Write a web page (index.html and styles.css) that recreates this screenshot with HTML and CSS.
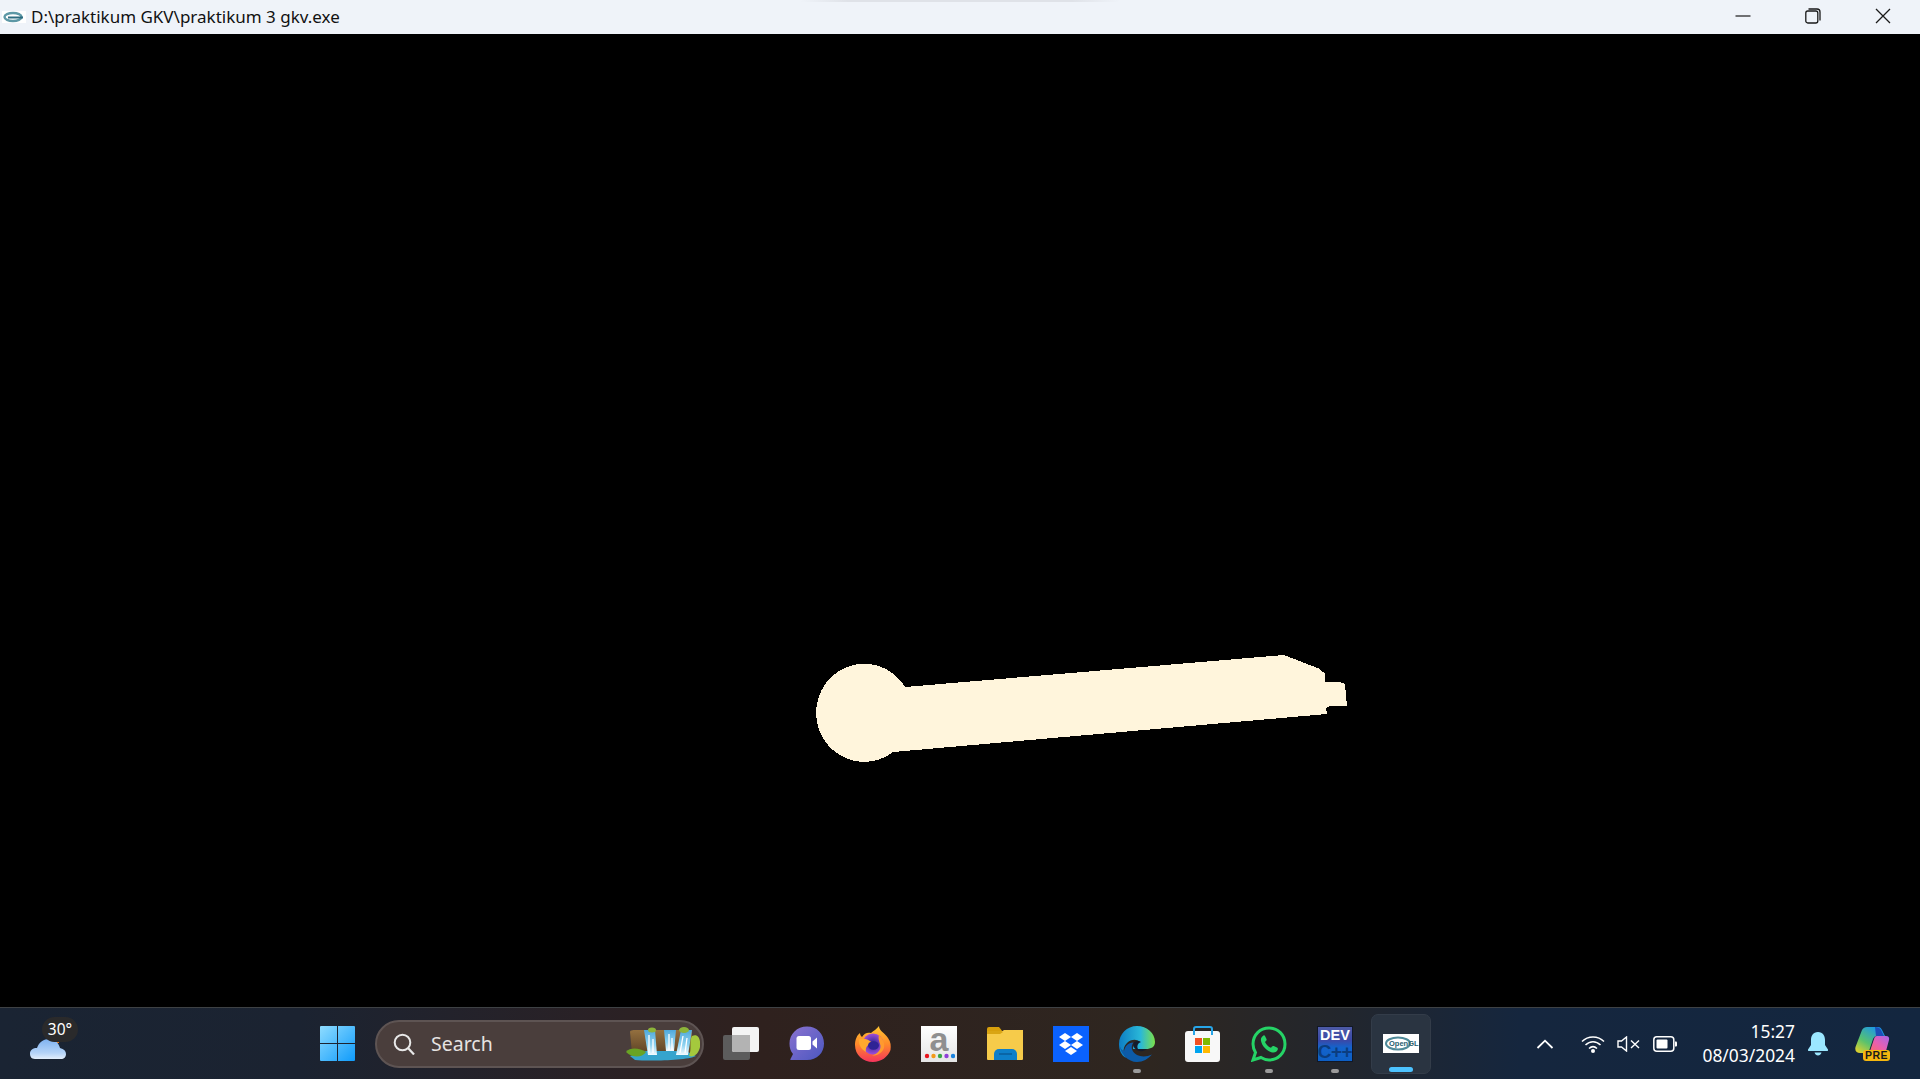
FILE: index.html
```html
<!DOCTYPE html>
<html lang="en">
<head>
<meta charset="utf-8">
<title>praktikum 3 gkv</title>
<link rel="stylesheet" href="styles.css">
</head>
<body>
<div class="desktop">
  <header class="titlebar">
    <span class="top-shade"></span>
    <svg class="title-icon" viewBox="0 0 24 12"><rect width="24" height="12" fill="#fff"/><ellipse cx="11" cy="6" rx="8.500" ry="4" fill="none" stroke="#5d98a6" stroke-width="2.400"/><path d="M6 6.500h15" stroke="#2d6c80" stroke-width="2"/></svg>
    <span class="title-text">D:\praktikum GKV\praktikum 3 gkv.exe</span>
    <div class="win-controls">
      <svg class="win-btn" viewBox="0 0 16 16"><path d="M0.500 8h15" stroke="#1a1a1a" stroke-width="1.200"/></svg>
      <svg class="win-btn" viewBox="0 0 16 16"><rect x="0.800" y="3" width="12" height="12" rx="2" fill="none" stroke="#1a1a1a" stroke-width="1.300"/><path d="M3.500 1h8.500a3 3 0 0 1 3 3v8.500" fill="none" stroke="#1a1a1a" stroke-width="1.300"/></svg>
      <svg class="win-btn" viewBox="0 0 16 16"><path d="M1 1l14 14M15 1L1 15" stroke="#1a1a1a" stroke-width="1.300"/></svg>
    </div>
  </header>

  <main class="viewport">
    <svg class="scene" viewBox="0 34 1920 973">
      <path class="shape" d="M905 687A48 49 0 1 0 893 752L1327 714L1326 708L1330 706L1347 706L1346 695L1345 684L1340 682L1325 682L1325 673L1322 672L1320 669L1284 655Z"/>
    </svg>
  </main>

  <footer class="taskbar">
    <div class="weather">
      <svg class="weather-icon" viewBox="0 0 36 22"><defs><linearGradient id="cloud" x1="0" y1="0" x2="0" y2="1"><stop offset="0" stop-color="#7fb2f0"/><stop offset="0.7" stop-color="#b5d4f8"/><stop offset="1" stop-color="#e3effc"/></linearGradient></defs><rect x="22" y="1" width="7" height="5" fill="#e8791b"/><path d="M5 22C1 22 0 19 0 16.500C0 13 3 11 7 11C9 5 14 2 19 2C26 2 29 7 30 11C34 12 36 14 36 17C36 20 34 22 31 22Z" fill="url(#cloud)"/></svg>
      <span class="temp">30°</span>
    </div>

    <div class="center">
      <button class="start" aria-label="Start">
        <svg class="ico35" viewBox="0 0 35 35"><defs><linearGradient id="win" x1="0" y1="0" x2="1" y2="1"><stop offset="0" stop-color="#8fdcff"/><stop offset="1" stop-color="#0f9bfb"/></linearGradient></defs><path fill="url(#win)" d="M1 0H17V17H0V1a1 1 0 0 1 1-1ZM18 0H34a1 1 0 0 1 1 1V17H18ZM0 18H17V35H1a1 1 0 0 1-1-1ZM18 18H35V34a1 1 0 0 1-1 1H18Z"/></svg>
      </button>

      <div class="search">
        <svg class="search-ico" viewBox="0 0 22 22"><circle cx="9.500" cy="9.500" r="7.800" fill="none" stroke="#e8e8e8" stroke-width="2"/><path d="M15 15l6 6.500" stroke="#e8e8e8" stroke-width="2.200"/></svg>
        <span class="search-label">Search</span>
        <svg class="waterfall" viewBox="0 0 74 34"><defs><linearGradient id="rock" x1="0" y1="0" x2="0" y2="1"><stop offset="0" stop-color="#94703f"/><stop offset="1" stop-color="#5f4426"/></linearGradient><linearGradient id="fall" x1="0" y1="0" x2="0" y2="1"><stop offset="0" stop-color="#4fa9dc"/><stop offset="0.6" stop-color="#8fd3f0"/><stop offset="1" stop-color="#f5fcff"/></linearGradient></defs><path d="M4 5C4 3 8 3 12 3H66V26H6Z" fill="url(#rock)"/><path d="M4 29L20 24H60L70 29C60 34 20 34 9 33Z" fill="#35a4cd"/><path d="M18 3H29L31 28H22Z" fill="url(#fall)"/><path d="M23 8V26M27 12V26" stroke="#fff" stroke-width="1.300"/><path d="M38 3H50L48 24H40Z" fill="url(#fall)"/><path d="M43 7V23M46 11V23" stroke="#fff" stroke-width="1.300"/><path d="M55 3H66L62 28H50Z" fill="url(#fall)"/><path d="M57 9L54 26M61 11L59 26" stroke="#fff" stroke-width="1.300"/><path d="M0 25C4 20 14 21 20 25C16 31 6 31 0 25Z" fill="#69a324"/><path d="M66 9C72 6 75 12 74 20C73 26 68 31 63 29C66 22 63 14 66 9Z" fill="#a4c93d"/><ellipse cx="26" cy="3" rx="4" ry="2.500" fill="#8cb43a"/><ellipse cx="58" cy="3" rx="5" ry="3" fill="#8cb43a"/></svg>
      </div>

      <div class="apps">
        <div class="app">
          <svg class="ico36" viewBox="0 0 36 36"><rect x="0" y="9" width="27" height="25" rx="2" fill="#5c5c5c"/><rect x="9" y="1" width="27" height="25" rx="2" fill="#f4f4f4"/><path d="M9 9H27V26H11a2 2 0 0 1-2-2Z" fill="#b3b3b3"/></svg>
        </div>
        <div class="app">
          <svg class="ico36" viewBox="0 0 36 36"><defs><linearGradient id="chat" x1="0" y1="0" x2="1" y2="1"><stop offset="0" stop-color="#8a72d0"/><stop offset="1" stop-color="#4b57c0"/></linearGradient></defs><path d="M18 0.500C28 0.500 35 8 35 17.500C35 27 28 34 18 34H2.500C1 34 1 33.500 2 32L4 28C1.500 25 0.500 21.500 0.500 17.500C0.500 8 8 0.500 18 0.500Z" fill="url(#chat)"/><rect x="7.500" y="10" width="14.500" height="14" rx="2.500" fill="#fff"/><path d="M23.500 15.500L28 11.500V22.500L23.500 18.500Z" fill="#fff"/></svg>
        </div>
        <div class="app">
          <svg class="ico36" viewBox="0 0 36 36"><defs><linearGradient id="fx" x1="0.500" y1="0" x2="0.500" y2="1"><stop offset="0" stop-color="#ffc632"/><stop offset="0.5" stop-color="#ff8a2a"/><stop offset="1" stop-color="#f5345c"/></linearGradient><radialGradient id="fxc"><stop offset="0.2" stop-color="#3b2a9c"/><stop offset="1" stop-color="#a04fd8"/></radialGradient></defs><path d="M24 0C24 5 30 7 33 12C36 16 36 20 35.500 24C33 31 26 36 18 36C8 36 0 29 0 19C0 14 2 9 5 7C5 9 6 10 7 11C9 7 13 6 16 7C18 5 22 3 24 0Z" fill="url(#fx)"/><circle cx="18" cy="18" r="10.500" fill="url(#fxc)"/><path d="M4 13C10 12 13 13 18 17C13 18 10 21 11 26C6 23 3 18 4 13Z" fill="#ffa92e"/><path d="M24 9C28 13 30 17 29 22C27 27 22 30 17 29.500C23 28 27 23 25 18C24 15 23 12 24 9Z" fill="#ff9a2e"/><ellipse cx="18.500" cy="19.500" rx="5.500" ry="4.200" fill="#2e2395"/></svg>
        </div>
        <div class="app">
          <div class="amazon">
            <span class="amazon-a">a</span>
            <svg class="amazon-dots" viewBox="0 0 31 6"><circle cx="3" cy="3" r="2.200" fill="#e8141c"/><circle cx="9.500" cy="3" r="2.200" fill="#f39a1a"/><circle cx="16" cy="3" r="2.200" fill="#3aa648"/><circle cx="22.500" cy="3" r="2.200" fill="#8f3fd8"/><circle cx="29" cy="3" r="2.200" fill="#1b84e0"/></svg>
          </div>
        </div>
        <div class="app">
          <svg class="ico36" viewBox="0 0 36 34"><path d="M0 2a2 2 0 0 1 2-2H12L16 5H0Z" fill="#d79f0c"/><path d="M0 5H14L17 3H36V32a1 1 0 0 1-1 1H1a1 1 0 0 1-1-1Z" fill="#f6cb4a"/><path d="M0 4H14L16 5L13 7H0Z" fill="#d9a514"/><path d="M7 33V27a5 5 0 0 1 5-5H25a5 5 0 0 1 5 5V33Z" fill="#0e7fc9"/><path d="M12 27H25" stroke="#0a5d9a" stroke-width="1.500"/></svg>
        </div>
        <div class="app">
          <svg class="ico36" viewBox="0 0 36 36"><rect width="36" height="36" fill="#0a62fe"/><path fill="#fff" d="M12 7L18 11L12 15L6 11ZM24 7L30 11L24 15L18 11ZM12 15L18 19L12 23L6 19ZM24 15L30 19L24 23L18 19ZM18 21L24 25L18 29L12 25Z"/></svg>
        </div>
        <div class="app">
          <svg class="ico36" viewBox="0 0 36 36"><defs><linearGradient id="edge1" x1="0" y1="0.500" x2="1" y2="0.500"><stop offset="0" stop-color="#0d7ec4"/><stop offset="0.6" stop-color="#2ab8d8"/><stop offset="1" stop-color="#7be04a"/></linearGradient></defs><path d="M18 0C28 0 36 7 36 16C36 21 32 23 27 23H14C14 19 17 16 21 16C18 13 13 13 9 16C4 20 3 27 7 32C2 29 0 24 0 18C0 8 8 0 18 0Z" fill="url(#edge1)"/><path d="M0.500 19C1.500 28 9 36 18 36C24 36 29 33 33 28.500C28 31 22 31 18 29C13 26 11 21 14.500 16.500C9 17 6 20 5 25C2.500 24 1 22 0.500 19Z" fill="#0c5ba8"/><path d="M15 16.500C17 14.500 20 14.500 22 16C19 17 17.500 20 19 23H28C25 25.500 20.500 26 17 23.500C14.500 21.500 13.500 19 15 16.500Z" fill="#141c2c"/></svg>
          <span class="dot"></span>
        </div>
        <div class="app">
          <svg class="ico36" viewBox="0 0 36 36"><rect x="0" y="5" width="35" height="31" rx="3" fill="#f8f8f8"/><path d="M9 9V3a2 2 0 0 1 2-2H25a2 2 0 0 1 2 2V9" fill="none" stroke="#27a5e8" stroke-width="2"/><rect x="10" y="12" width="7" height="7" fill="#f25022"/><rect x="18" y="12" width="7" height="7" fill="#7fba00"/><rect x="10" y="20" width="7" height="7" fill="#00a4ef"/><rect x="18" y="20" width="7" height="7" fill="#ffb900"/></svg>
        </div>
        <div class="app">
          <svg class="ico36" viewBox="0 0 36 36"><path d="M18 2C9 2 2 9 2 18C2 21 3 24 4.500 26.500L2 34L10 31.500C12.500 33 15 34 18 34C27 34 34 27 34 18C34 9 27 2 18 2Z" fill="none" stroke="#25d366" stroke-width="3"/><path d="M12.500 9.500C11 10.500 9.500 12 10 15C11 20 16 25.500 21.500 26.500C24 27 26 25.500 26.800 23.500C27 22.500 26.800 22 26 21.600L22.800 20C22 19.700 21.500 20 21 20.600L20 21.800C17.500 21 15 18.500 14 16L15.200 14.800C15.700 14.200 15.700 13.700 15.500 13L14 10C13.700 9.300 13 9.200 12.500 9.500Z" fill="#25d366"/></svg>
          <span class="dot"></span>
        </div>
        <div class="app">
          <div class="dev">
            <span class="dev-top">DEV</span>
            <span class="dev-bottom">C++</span>
          </div>
          <span class="dot"></span>
        </div>
        <div class="app active">
          <div class="ogl">
            <svg class="ogl-swoosh" viewBox="0 0 36 19"><ellipse cx="15" cy="9.500" rx="12" ry="6" fill="none" stroke="#4f8a99" stroke-width="2"/></svg>
            <span class="ogl-text">OpenGL</span>
          </div>
          <span class="run"></span>
        </div>
      </div>
    </div>

    <div class="tray">
      <svg class="chev" viewBox="0 0 18 10"><path d="M1.500 9L9 1.700L16.500 9" fill="none" stroke="#fff" stroke-width="1.800"/></svg>
      <svg class="wifi" viewBox="0 0 24 18"><g fill="none" stroke="#fff" stroke-width="1.500"><path d="M1 6.500C7 0.500 17 0.500 23 6.500"/><path d="M4.500 10C9 5.500 15 5.500 19.500 10"/><path d="M8 13.500C10.500 11.200 13.500 11.200 16 13.500"/></g><circle cx="12" cy="16" r="2" fill="#fff"/></svg>
      <svg class="vol" viewBox="0 0 23 16"><path d="M1 5H4.500L9.500 1V15L4.500 11H1Z" fill="none" stroke="#fff" stroke-width="1.400"/><path d="M14 4.500L22 12M22 4.500L14 12" stroke="#fff" stroke-width="1.400"/></svg>
      <svg class="batt" viewBox="0 0 24 16"><rect x="0.800" y="0.800" width="20" height="14.400" rx="3" fill="none" stroke="#fff" stroke-width="1.500"/><rect x="3.500" y="3.500" width="11" height="9" rx="1" fill="#fff"/><path d="M22 5.500h1a1 1 0 0 1 1 1v3a1 1 0 0 1-1 1h-1Z" fill="#fff"/></svg>
      <div class="clock"><span>15:27</span><span>08/03/2024</span></div>
      <svg class="bell" viewBox="0 0 20 24"><path d="M10 0C5 0 3 4 3 8V13L0 17.500C-0.300 18.500 0.300 19 1 19H19C19.700 19 20.300 18.500 20 17.500L17 13V8C17 4 15 0 10 0Z" fill="#9be7ff"/><path d="M6.500 20.500H13.500C13 22.500 11.500 23.500 10 23.500C8.500 23.500 7 22.500 6.500 20.500Z" fill="#9be7ff"/></svg>
      <div class="copilot">
        <svg class="copilot-ico" viewBox="0 0 35 26"><defs><linearGradient id="cp1" x1="0" y1="1" x2="0.700" y2="0"><stop offset="0" stop-color="#f4d323"/><stop offset="0.45" stop-color="#58c26e"/><stop offset="1" stop-color="#1a96ea"/></linearGradient><linearGradient id="cp2" x1="0" y1="1" x2="1" y2="0"><stop offset="0" stop-color="#ff6e58"/><stop offset="0.5" stop-color="#e85fb0"/><stop offset="1" stop-color="#a667e8"/></linearGradient></defs><path d="M7 3C8 1 10 0 12 0H23C25 0 26 1 27 3L30 9H22C20 9 19 10 18 12L14 24C13.500 25 12 26 10 26H5C2 26 -0.500 24 0.500 20Z" fill="url(#cp1)"/><path d="M20 0C23 0 25 1 26 3L29 9H21Z" fill="#1c4fb8"/><path d="M22 9H31C33.500 9 34.500 10.500 34 13L31 24C30.500 25.500 29 26 27 26H13L15 24L19 12C19.500 10 20.500 9 22 9Z" fill="url(#cp2)"/></svg>
        <span class="pre">PRE</span>
      </div>
    </div>
  </footer>
</div>
</body>
</html>
```

FILE: styles.css
```css
* { box-sizing: border-box; margin: 0; padding: 0; }
html, body { width: 100%; height: 100%; overflow: hidden; background: #000; }
body { font-family: "Noto Sans", "Open Sans", sans-serif; }

.desktop { display: flex; flex-direction: column; width: 1920px; height: 1079px; }

/* title bar */
.titlebar {
  position: relative;
  flex: 0 0 34px;
  display: flex;
  align-items: center;
  padding: 0 0 1px 2px;
  background: #eff3f9;
  color: #111;
}
.top-shade {
  position: absolute;
  left: 800px;
  top: 0;
  width: 320px;
  height: 2px;
  background: linear-gradient(90deg, #eff3f9, #dfe2e8 15%, #dfe2e8 85%, #eff3f9);
}
.title-icon { width: 24px; height: 12px; margin-right: 5px; }
.title-text { font-size: 17px; white-space: nowrap; }
.win-controls { display: flex; margin-left: auto; gap: 54px; padding: 0 29px 2px 0; }
.win-btn { width: 16px; height: 16px; display: block; }

/* canvas */
.viewport { flex: 1 1 auto; min-height: 0; background: #000; }
.scene { display: block; width: 100%; height: 100%; }
.shape { fill: #fff5dc; shape-rendering: crispEdges; }

/* taskbar */
.taskbar {
  flex: 0 0 72px;
  display: flex;
  align-items: center;
  border-top: 1px solid #3e4144;
  background: linear-gradient(90deg, #1a2433 0, #1b2331 300px, #2a2125 600px, #2f211e 760px, #2e2620 1150px, #23262c 1330px, #15263e 1520px, #13263f 1920px);
}
.weather { position: relative; flex: 0 0 307px; height: 100%; }
.weather-icon { position: absolute; left: 30px; top: 29px; width: 36px; height: 22px; }
.temp {
  position: absolute;
  left: 42px;
  top: 9px;
  width: 36px;
  height: 25px;
  border-radius: 13px;
  background: #2a2a2b;
  color: #fff;
  font-size: 15.5px;
  line-height: 25px;
  text-align: center;
}

.center { display: flex; align-items: center; }
.start { flex: 0 0 60px; height: 36px; display: flex; align-items: center; justify-content: center; border: 0; background: none; margin-right: 8px; }
.ico35 { width: 35px; height: 35px; display: block; }

.search {
  display: flex;
  align-items: center;
  width: 329px;
  height: 48px;
  margin-right: 7px;
  padding: 0 2px 0 16px;
  border: 2px solid #5e5453;
  border-radius: 24px;
  background: #4a3e3c;
}
.search-ico { width: 22px; height: 22px; }
.search-label { margin-left: 16px; font-size: 19.5px; color: #e6e3e2; }
.waterfall { width: 74px; height: 34px; margin-left: auto; }

.apps { display: flex; gap: 6px; }
.app { position: relative; width: 60px; height: 60px; display: flex; align-items: center; justify-content: center; border-radius: 7px; }
.ico36 { width: 36px; height: 36px; display: block; }
.active { background: #2a3441; border: 1px solid #333c49; }
.dot { position: absolute; left: 26px; bottom: 1px; width: 8px; height: 4px; border-radius: 2px; background: #9b9b9b; }
.run { position: absolute; left: 17px; bottom: 1px; width: 24px; height: 5px; border-radius: 3px; background: #4cc2ff; }

.amazon { width: 36px; height: 36px; display: flex; flex-direction: column; align-items: center; background: linear-gradient(#fff, #e5e5e5); }
.amazon-a { font: 700 34px/27px "Liberation Sans", sans-serif; color: #8f8f8f; height: 26px; }
.amazon-dots { width: 31px; height: 6px; margin-top: 1px; }

.dev { width: 36px; height: 36px; display: flex; flex-direction: column; align-items: center; background: linear-gradient(#4d5aa6 0, #3a49a8 40%, #1463cc 60%, #0d5fc4 100%); border: 1px solid #111827; overflow: hidden; }
.dev-top { font: 700 14.5px/17px "Liberation Sans", sans-serif; color: #fff; }
.dev-bottom { font: 700 19px/15px "Liberation Sans", sans-serif; color: #0b3d80; letter-spacing: -0.5px; }

.ogl { position: relative; width: 36px; height: 19px; background: #fff; }
.ogl-swoosh { position: absolute; inset: 0; width: 36px; height: 19px; }
.ogl-text { position: absolute; left: 6px; top: 0; font: 700 7.5px/19px "Liberation Sans", sans-serif; color: #27606f; }

/* tray */
.tray { display: flex; align-items: center; margin-left: auto; padding-right: 30px; }
.chev { width: 18px; height: 10px; margin-right: 27px; }
.wifi { width: 24px; height: 18px; margin-right: 12px; }
.vol { width: 23px; height: 16px; margin-right: 13px; }
.batt { width: 24px; height: 16px; }
.clock { width: 118px; padding-bottom: 2px; display: flex; flex-direction: column; align-items: flex-end; color: #fff; font-size: 17.4px; line-height: 24px; }
.bell { width: 20px; height: 24px; margin-left: 13px; }
.copilot { position: relative; width: 35px; height: 34px; margin-left: 27px; }
.copilot-ico { width: 35px; height: 26px; display: block; }
.pre { position: absolute; left: 8px; bottom: 0; width: 27px; height: 11px; border-radius: 3px; background: #f5b70f; color: #1a1a1a; font: 700 10.5px/11px "Liberation Sans", sans-serif; letter-spacing: 0.5px; text-align: center; }
```
